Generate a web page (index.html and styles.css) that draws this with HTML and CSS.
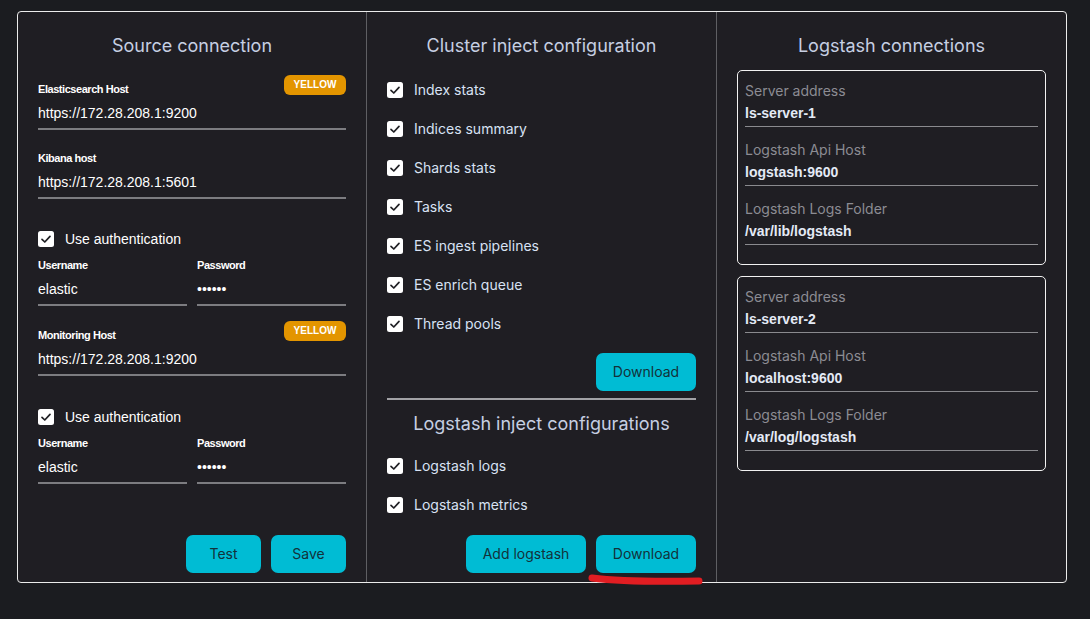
FILE: index.html
```html
<!DOCTYPE html>
<html lang="en">
<head>
<meta charset="utf-8">
<title>Inject configuration</title>
<link rel="stylesheet" href="styles.css">
</head>
<body>
<div class="frame">
  <section class="col col-source">
    <h2 class="title">Source connection</h2>

    <div class="field field-first">
      <div class="label-row"><span class="label">Elasticsearch Host</span><span class="chip">YELLOW</span></div>
      <div class="input">https://172.28.208.1:9200</div>
    </div>

    <div class="field field-kibana">
      <div class="label">Kibana host</div>
      <div class="input">https://172.28.208.1:5601</div>
    </div>

    <label class="check check-auth">
      <svg class="box" viewBox="0 0 16 16"><rect x="0" y="0" width="16" height="16" rx="2.5" fill="#fff"/><polyline points="4,8.3 6.8,11 12,5.4" fill="none" stroke="#202024" stroke-width="1.7" stroke-linecap="round" stroke-linejoin="round"/></svg>
      <span class="check-text plain">Use authentication</span>
    </label>

    <div class="creds">
      <div class="field">
        <div class="label">Username</div>
        <div class="input">elastic</div>
      </div>
      <div class="field">
        <div class="label">Password</div>
        <div class="input">••••••</div>
      </div>
    </div>

    <div class="field field-monitor">
      <div class="label-row"><span class="label">Monitoring Host</span><span class="chip">YELLOW</span></div>
      <div class="input">https://172.28.208.1:9200</div>
    </div>

    <label class="check check-auth2">
      <svg class="box" viewBox="0 0 16 16"><rect x="0" y="0" width="16" height="16" rx="2.5" fill="#fff"/><polyline points="4,8.3 6.8,11 12,5.4" fill="none" stroke="#202024" stroke-width="1.7" stroke-linecap="round" stroke-linejoin="round"/></svg>
      <span class="check-text plain">Use authentication</span>
    </label>

    <div class="creds">
      <div class="field">
        <div class="label">Username</div>
        <div class="input">elastic</div>
      </div>
      <div class="field">
        <div class="label">Password</div>
        <div class="input">••••••</div>
      </div>
    </div>

    <div class="actions">
      <button class="btn btn-sm">Test</button>
      <button class="btn btn-sm">Save</button>
    </div>
  </section>

  <section class="col col-cluster">
    <h2 class="title">Cluster inject configuration</h2>
    <ul class="checklist list-cluster">
      <li class="row"><svg class="box" viewBox="0 0 16 16"><rect width="16" height="16" rx="2.5" fill="#fff"/><polyline points="4,8.3 6.8,11 12,5.4" fill="none" stroke="#202024" stroke-width="1.7" stroke-linecap="round" stroke-linejoin="round"/></svg><span class="check-text">Index stats</span></li>
      <li class="row"><svg class="box" viewBox="0 0 16 16"><rect width="16" height="16" rx="2.5" fill="#fff"/><polyline points="4,8.3 6.8,11 12,5.4" fill="none" stroke="#202024" stroke-width="1.7" stroke-linecap="round" stroke-linejoin="round"/></svg><span class="check-text">Indices summary</span></li>
      <li class="row"><svg class="box" viewBox="0 0 16 16"><rect width="16" height="16" rx="2.5" fill="#fff"/><polyline points="4,8.3 6.8,11 12,5.4" fill="none" stroke="#202024" stroke-width="1.7" stroke-linecap="round" stroke-linejoin="round"/></svg><span class="check-text">Shards stats</span></li>
      <li class="row"><svg class="box" viewBox="0 0 16 16"><rect width="16" height="16" rx="2.5" fill="#fff"/><polyline points="4,8.3 6.8,11 12,5.4" fill="none" stroke="#202024" stroke-width="1.7" stroke-linecap="round" stroke-linejoin="round"/></svg><span class="check-text">Tasks</span></li>
      <li class="row"><svg class="box" viewBox="0 0 16 16"><rect width="16" height="16" rx="2.5" fill="#fff"/><polyline points="4,8.3 6.8,11 12,5.4" fill="none" stroke="#202024" stroke-width="1.7" stroke-linecap="round" stroke-linejoin="round"/></svg><span class="check-text">ES ingest pipelines</span></li>
      <li class="row"><svg class="box" viewBox="0 0 16 16"><rect width="16" height="16" rx="2.5" fill="#fff"/><polyline points="4,8.3 6.8,11 12,5.4" fill="none" stroke="#202024" stroke-width="1.7" stroke-linecap="round" stroke-linejoin="round"/></svg><span class="check-text">ES enrich queue</span></li>
      <li class="row"><svg class="box" viewBox="0 0 16 16"><rect width="16" height="16" rx="2.5" fill="#fff"/><polyline points="4,8.3 6.8,11 12,5.4" fill="none" stroke="#202024" stroke-width="1.7" stroke-linecap="round" stroke-linejoin="round"/></svg><span class="check-text">Thread pools</span></li>
    </ul>
    <div class="single-action">
      <button class="btn btn-md">Download</button>
    </div>
    <hr class="divider">
    <h2 class="title title-logstash">Logstash inject configurations</h2>
    <ul class="checklist list-logstash">
      <li class="row"><svg class="box" viewBox="0 0 16 16"><rect width="16" height="16" rx="2.5" fill="#fff"/><polyline points="4,8.3 6.8,11 12,5.4" fill="none" stroke="#202024" stroke-width="1.7" stroke-linecap="round" stroke-linejoin="round"/></svg><span class="check-text">Logstash logs</span></li>
      <li class="row"><svg class="box" viewBox="0 0 16 16"><rect width="16" height="16" rx="2.5" fill="#fff"/><polyline points="4,8.3 6.8,11 12,5.4" fill="none" stroke="#202024" stroke-width="1.7" stroke-linecap="round" stroke-linejoin="round"/></svg><span class="check-text">Logstash metrics</span></li>
    </ul>
    <div class="actions">
      <button class="btn btn-lg">Add logstash</button>
      <button class="btn btn-md">Download</button>
    </div>
  </section>

  <section class="col col-logstash">
    <h2 class="title">Logstash connections</h2>
    <div class="card">
      <div class="kv"><div class="k">Server address</div><div class="v">ls-server-1</div></div>
      <div class="kv"><div class="k">Logstash Api Host</div><div class="v">logstash:9600</div></div>
      <div class="kv"><div class="k">Logstash Logs Folder</div><div class="v">/var/lib/logstash</div></div>
    </div>
    <div class="card card-second">
      <div class="kv"><div class="k">Server address</div><div class="v">ls-server-2</div></div>
      <div class="kv"><div class="k">Logstash Api Host</div><div class="v">localhost:9600</div></div>
      <div class="kv"><div class="k">Logstash Logs Folder</div><div class="v">/var/log/logstash</div></div>
    </div>
  </section>

  <svg class="annotation" viewBox="0 0 120 18" width="120" height="18"><path d="M6 7 C 30 10, 60 11, 113 10" fill="none" stroke="#e11d22" stroke-width="7" stroke-linecap="round"/></svg>
</div>
</body>
</html>
```

FILE: styles.css
```css
* { box-sizing: border-box; }

html, body {
  margin: 0;
  padding: 0;
  background: #1b1c20;
  height: 100%;
}

body {
  font-family: "Liberation Sans", Arial, sans-serif;
  color: #ffffff;
  padding: 11px 0 0 17px;
}

.frame {
  position: relative;
  width: 1050px;
  height: 572px;
  border: 1px solid #ececec;
  border-radius: 4px;
  background: #1f1e23;
  display: grid;
  grid-template-columns: 348px 350px 350px;
}

.col {
  display: flex;
  flex-direction: column;
  padding: 22px 20px 9px;
  min-width: 0;
}

.col-cluster, .col-logstash {
  border-left: 1px solid #5f5f63;
}

.title {
  margin: 0;
  font-family: Inter, "Noto Sans", sans-serif;
  font-weight: 400;
  font-size: 18px;
  line-height: 24px;
  text-align: center;
  color: #c6cfe2;
}

/* Source column */
.field { display: flex; flex-direction: column; min-width: 0; }
.field-first { margin-top: 17px; }
.field-kibana { margin-top: 22px; }
.field-monitor { margin-top: 15px; }

.label-row {
  display: flex;
  justify-content: space-between;
  align-items: flex-end;
  height: 20px;
}

.label {
  font-family: "Liberation Sans", Arial, sans-serif;
  font-weight: 700;
  font-size: 11px;
  line-height: 12px;
  letter-spacing: -0.45px;
  color: #ffffff;
}

.chip {
  width: 62px;
  height: 20px;
  line-height: 20px;
  border-radius: 6px;
  background: #e39500;
  color: #ffffff;
  font-family: "Liberation Sans", Arial, sans-serif;
  font-weight: 700;
  font-size: 10px;
  text-align: center;
}

.input {
  margin-top: 8px;
  font-size: 14px;
  line-height: 20px;
  padding-bottom: 5px;
  border-bottom: 2px solid #7c7c80;
  color: #ffffff;
  white-space: nowrap;
}

.check {
  display: flex;
  align-items: center;
  height: 16px;
  gap: 11px;
}
.check-auth { margin-top: 32px; }
.check-auth2 { margin-top: 33px; }

.box { width: 16px; height: 16px; flex: none; display: block; }

.check-text {
  font-family: Inter, "Noto Sans", sans-serif;
  font-size: 14px;
  line-height: 16px;
  color: #d8e2f4;
}
.check-text.plain {
  font-family: "Liberation Sans", Arial, sans-serif;
  color: #ffffff;
}

.creds {
  margin-top: 12px;
  display: grid;
  grid-template-columns: 1fr 1fr;
  column-gap: 10px;
}

.actions {
  margin-top: auto;
  display: flex;
  justify-content: flex-end;
  gap: 10px;
}

.btn {
  height: 38px;
  padding: 0;
  border: none;
  border-radius: 7px;
  background: #00bcd4;
  color: #13313a;
  font-family: Inter, "Noto Sans", sans-serif;
  font-size: 14px;
  line-height: 38px;
  text-align: center;
}
.btn-sm { width: 75px; }
.btn-md { width: 100px; }
.btn-lg { width: 120px; }

/* Cluster column */
.checklist { list-style: none; margin: 0; padding: 0; }
.list-cluster { margin-top: 12px; }
.list-logstash { margin-top: 10px; }

.row {
  display: flex;
  align-items: center;
  gap: 11px;
  height: 39px;
}

.single-action {
  margin-top: 10px;
  display: flex;
  justify-content: flex-end;
}

.divider {
  margin: 7px 0 0;
  border: none;
  height: 2px;
  background: #a2a2a6;
}

.title-logstash { margin-top: 12px; }

/* Logstash column */
.card {
  margin-top: 12px;
  border: 1px solid #f2f2f2;
  border-radius: 5px;
  padding: 11px 7px 19px;
}
.card-second { margin-top: 11px; }

.kv + .kv { margin-top: 14px; }

.k {
  font-family: Inter, "Noto Sans", sans-serif;
  font-size: 14px;
  line-height: 18px;
  color: #8c8c93;
}

.v {
  margin-top: 4px;
  font-family: "Liberation Sans", Arial, sans-serif;
  font-weight: 700;
  font-size: 14px;
  line-height: 18px;
  color: #e4eaf6;
  padding-bottom: 4px;
  border-bottom: 1px solid #8a8a8e;
}

/* Hand-drawn highlight over the screenshot */
.annotation {
  position: absolute;
  left: 568px;
  top: 559px;
  pointer-events: none;
}
```
